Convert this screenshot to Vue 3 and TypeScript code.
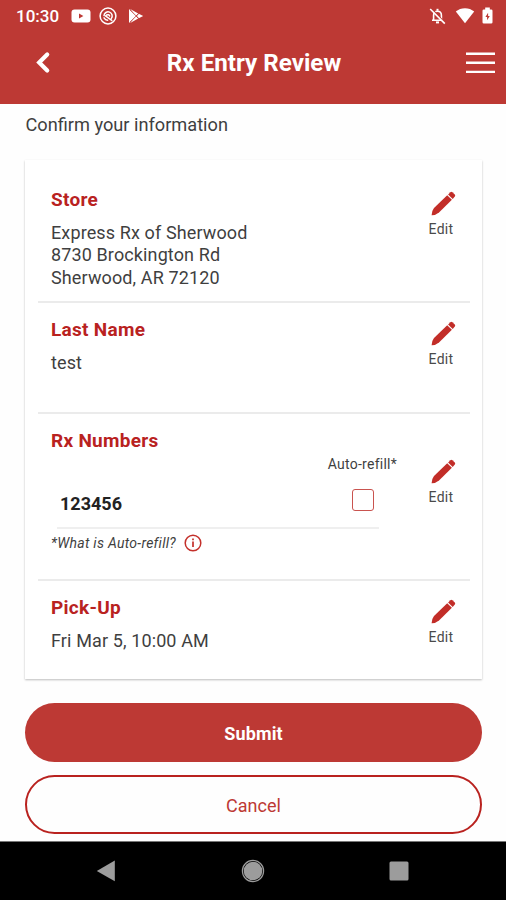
<script setup lang="ts">
import { ref } from 'vue'

interface Section {
  key: string
  title: string
  lines: string[]
}

const sections: Section[] = [
  {
    key: 'store',
    title: 'Store',
    lines: ['Express Rx of Sherwood', '8730 Brockington Rd', 'Sherwood, AR 72120'],
  },
  { key: 'name', title: 'Last Name', lines: ['test'] },
  { key: 'rx', title: 'Rx Numbers', lines: [] },
  { key: 'pickup', title: 'Pick-Up', lines: ['Fri Mar 5, 10:00 AM'] },
]

const autoRefill = ref(false)
</script>

<template>
  <div class="screen">
    <header class="header">
      <div class="status">
        <span class="clock">10:30</span>
        <svg class="youtube" width="20" height="14" viewBox="0 0 20 14">
          <rect x="0.5" y="0.5" width="19" height="13" rx="3" fill="#fff" />
          <path d="M8 4.6v4.8l4.4-2.4z" fill="#bd3934" />
        </svg>
        <svg class="badge" width="18" height="18" viewBox="0 0 18 18" fill="none" stroke="#fff" stroke-linecap="round">
          <circle cx="9" cy="9" r="7.9" stroke-width="1.5" />
          <path d="M5 8.6a4.100 4.100 0 1 1 7.400 2.800" stroke-width="1.500" />
          <path d="M7.600 8q2.200-1 3 1M6.400 8.800l6.400 4.600M5 10.800q1.400 2.200 3.600 2.400" stroke-width="1.500" />
        </svg>
        <svg class="play" width="16" height="16" viewBox="0 0 16 16">
          <path d="M1 1v14l7.600-7z" fill="#fff" />
          <path d="M2.200 1l8 4.500L7.800 8zM2.200 15l8-4.500L7.800 8zM10.800 5.800L15.200 8l-4.400 2.200L8.800 8z" fill="#fff" />
          <path d="M2 1.800l8.600 8.600M2 14.200l8.600-8.600" stroke="#bd3934" stroke-width="0.800" />
        </svg>
        <span class="spacer"></span>
        <svg class="bell" width="17" height="18" viewBox="0 0 17 18" fill="none" stroke="#fff">
          <path d="M4.600 13V8.200c0-2.400 1.400-4 3.900-4s3.900 1.600 3.900 4V13M3 13.200h11" stroke-width="1.600" />
          <path d="M8.500 1.800v2" stroke-width="2" />
          <path d="M7 15.400h3" stroke-width="2" />
          <path d="M2.400 1.400l14 14.800" stroke="#bd3934" stroke-width="1.400" />
          <path d="M1.200 2l14.600 14.600" stroke-width="1.600" />
        </svg>
        <svg class="wifi" width="20" height="17" viewBox="0 0 20 17">
          <path d="M10 16.200L0.800 4.500C5.800 0 14.200 0 19.200 4.500z" fill="#fff" />
        </svg>
        <svg class="battery" width="11" height="17" viewBox="0 0 11 17">
          <path d="M3.200 0.600h4.600v1.800h1.400q1.300 0 1.300 1.300v11.500q0 1.300-1.300 1.300H1.800q-1.300 0-1.300-1.300V3.700q0-1.300 1.300-1.300h1.400z" fill="#fff" />
          <path d="M6.100 5.800L3.400 10h1.700v3.200L7.800 9H6.100z" fill="#bd3934" />
        </svg>
      </div>
      <div class="toolbar">
        <button class="icon-button back" aria-label="Back">
          <svg width="16" height="24" viewBox="0 0 16 24" fill="none" stroke="#fff" stroke-width="4.200" stroke-linecap="round">
            <path d="M12.200 3.600L4.200 11.600l8 8" />
          </svg>
        </button>
        <h1>Rx Entry Review</h1>
        <button class="icon-button menu" aria-label="Menu">
          <svg width="29" height="22" viewBox="0 0 29 22" stroke="#fff" stroke-width="2.400">
            <path d="M0 1.700h29M0 10.800h29M0 19.900h29" />
          </svg>
        </button>
      </div>
    </header>

    <main class="content">
      <p class="intro">Confirm your information</p>
      <div class="card">
        <section v-for="s in sections" :key="s.key" class="section" :class="s.key">
          <div class="info">
            <h2>{{ s.title }}</h2>
            <p v-for="line in s.lines" :key="line" class="line">{{ line }}</p>
            <template v-if="s.key === 'rx'">
              <div class="rx-row">
                <span class="rx-number">123456</span>
                <label class="refill">
                  <span>Auto-refill*</span>
                  <input v-model="autoRefill" type="checkbox" />
                </label>
              </div>
              <div class="hint">
                <em>*What is Auto-refill?</em>
                <svg width="18" height="18" viewBox="0 0 18 18" fill="none" stroke="#c4302b">
                  <circle cx="9" cy="9" r="7.800" stroke-width="1.500" />
                  <path d="M9 7.400v5.600M9 4.600v1.600" stroke-width="1.700" />
                </svg>
              </div>
            </template>
          </div>
          <button class="edit">
            <svg width="25" height="25" viewBox="0 0 25 25" fill="#c22d28">
              <path d="M0.600 24.300Q0.600 20 3 17L16.200 4.200l4.700 4.600L8 21.600Q4.500 24.500 0.600 24.300z" />
              <path d="M17.100 3.400l2.300-2.200q1-0.900 2 0l2.400 2.400q0.900 1 0 2L21.700 7.900z" />
            </svg>
            <span>Edit</span>
          </button>
        </section>
      </div>
      <button class="action submit">Submit</button>
      <button class="action cancel">Cancel</button>
    </main>

    <nav class="navbar">
      <svg width="20" height="22" viewBox="0 0 20 22"><path d="M18.800 0.600v20.600L0.800 11z" fill="#9c9c9c" /></svg>
      <svg width="24" height="24" viewBox="0 0 24 24">
        <circle cx="12" cy="12" r="10.600" fill="none" stroke="#9c9c9c" stroke-width="1.200" />
        <circle cx="12" cy="12" r="9.300" fill="#9c9c9c" />
      </svg>
      <svg width="20" height="20" viewBox="0 0 20 20"><rect x="0.500" y="0.500" width="19" height="19" rx="1.500" fill="#9c9c9c" /></svg>
    </nav>
  </div>
</template>

<style>
body {
  margin: 0;
  background: #fff;
}
</style>

<style scoped>
* {
  box-sizing: border-box;
}
.screen {
  display: flex;
  flex-direction: column;
  width: 506px;
  height: 900px;
  overflow: hidden;
  background: #fefefe;
  color: #3f3f3f;
  font-family: Roboto, 'Liberation Sans', sans-serif;
}
button {
  border: 0;
  padding: 0;
  background: none;
  font-family: inherit;
}
h1, h2, p {
  margin: 0;
}
svg {
  display: block;
  flex: none;
}
.header {
  height: 104px;
  background: #bd3934;
  color: #fff;
}
.status {
  display: flex;
  align-items: center;
  height: 31px;
  padding: 0 13px 0 16px;
}
.clock {
  width: 55px;
  font-size: 17px;
  font-weight: 500;
}
.badge {
  margin-left: 8px;
}
.play {
  margin-left: 11px;
}
.spacer {
  flex: 1;
}
.wifi {
  margin-left: 9px;
}
.battery {
  margin-left: 7px;
}
.toolbar {
  display: grid;
  grid-template-columns: 60px 1fr 60px;
  align-items: center;
  height: 63px;
  padding: 0 11px 0 13px;
}
.back {
  margin-left: 22px;
}
h1 {
  text-align: center;
  font-size: 24.200px;
  font-weight: 700;
}
.menu {
  justify-self: end;
}
.content {
  display: flex;
  flex-direction: column;
  flex: 1;
  padding: 0 24px 0 25px;
}
.intro {
  height: 56px;
  padding: 9px 0 0 0.500px;
  font-size: 18.200px;
  line-height: 24px;
}
.card {
  height: 519px;
  padding: 13px 12px 0 13px;
  background: #fff;
  box-shadow: 0 1px 2px rgba(0, 0, 0, 0.26);
}
.section {
  display: flex;
  justify-content: space-between;
  padding: 15px 14px 0 13px;
  border-bottom: 2px solid #ebebeb;
}
.store {
  height: 130px;
}
.name {
  height: 111px;
}
.rx {
  height: 167px;
}
.pickup {
  border-bottom: 0;
}
.info {
  width: 328px;
}
h2 {
  height: 34px;
  color: #b9221f;
  font-size: 19px;
  font-weight: 700;
  line-height: 24px;
  letter-spacing: 0.280px;
}
.line {
  font-size: 18px;
  line-height: 22px;
  letter-spacing: 0.120px;
}
.store .line {
  line-height: 22.300px;
}
.edit {
  display: flex;
  flex-direction: column;
  align-items: center;
  align-self: flex-start;
  gap: 4px;
  margin-top: 3px;
  color: #4a4a4a;
  font-size: 14px;
  line-height: 18px;
  letter-spacing: 0.300px;
}
.edit svg {
  margin-left: 5px;
}
.rx .edit {
  margin-top: 30px;
}
.rx-row {
  display: flex;
  justify-content: space-between;
  height: 74px;
  margin: -8px 0 0 6px;
  border-bottom: 2px solid #efefef;
}
.rx-number {
  padding: 37px 0 0 3px;
  color: #222;
  font-size: 18px;
  font-weight: 700;
  line-height: 24px;
}
.refill {
  display: flex;
  flex-direction: column;
  align-items: center;
  margin: 1px -18px 0 0;
  font-size: 14px;
  line-height: 16px;
  letter-spacing: 0.250px;
}
.refill input {
  appearance: none;
  width: 22px;
  height: 22px;
  margin: 17px 0 0 1px;
  border: 1.500px solid #c9534f;
  border-radius: 3px;
}
.hint {
  display: flex;
  align-items: center;
  gap: 8px;
  height: 28px;
  font-size: 14px;
  letter-spacing: 0.280px;
}
.action {
  height: 59px;
  border-radius: 30px;
  font-size: 18px;
}
.submit {
  margin-top: 24px;
  padding-top: 2px;
  background: #bd3934;
  color: #fff;
  font-weight: 700;
  letter-spacing: 0.150px;
}
.cancel {
  margin-top: 13px;
  padding-top: 2px;
  border: 2.500px solid #b9221f;
  color: #bd3934;
}
.navbar {
  display: flex;
  align-items: center;
  justify-content: space-between;
  height: 59px;
  padding: 0 97px 1px 96px;
  border-top: 1px solid #777;
  background: #000;
}
</style>
